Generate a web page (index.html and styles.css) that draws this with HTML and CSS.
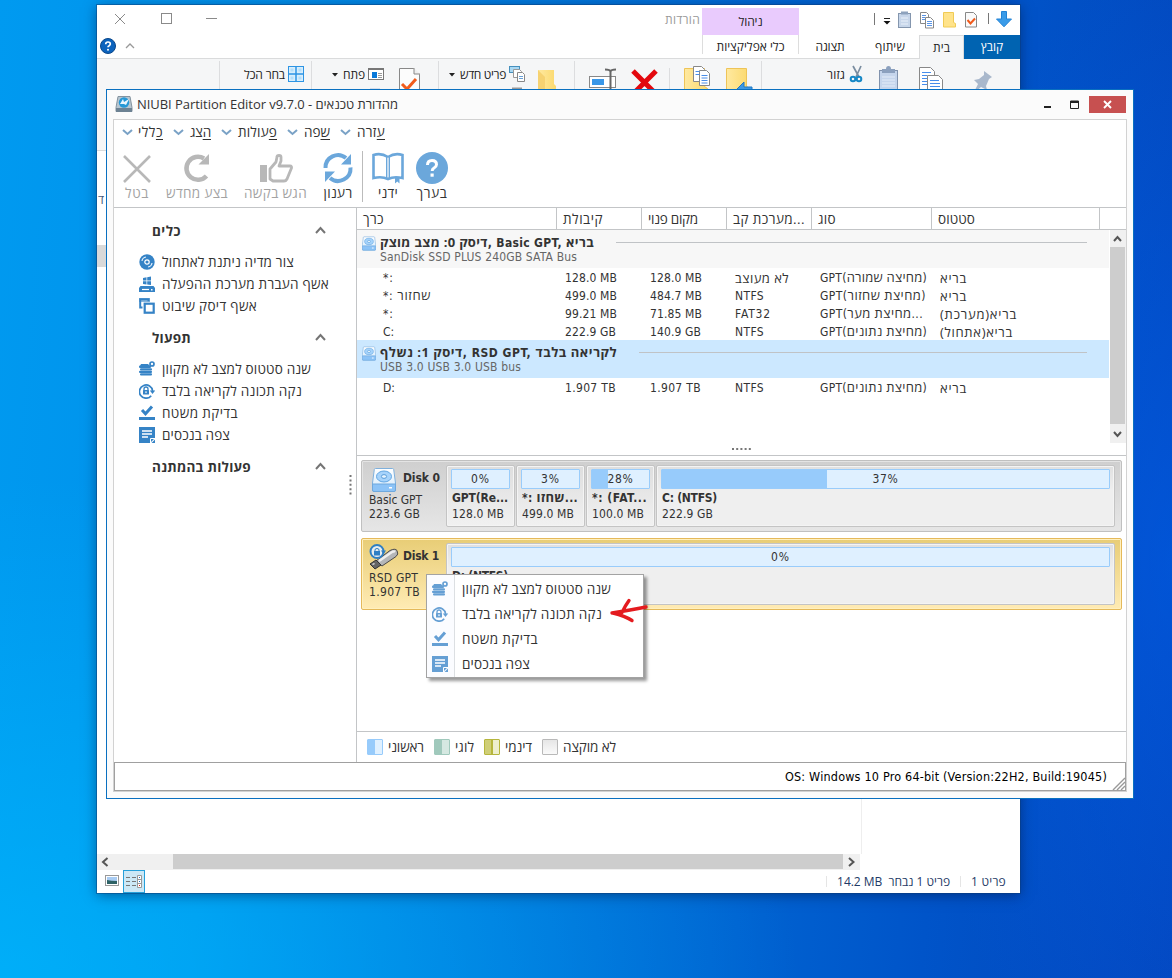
FILE: index.html
```html
<!DOCTYPE html>
<html lang="he">
<head>
<meta charset="utf-8">
<title>NIUBI Partition Editor</title>
<link rel="stylesheet" href="styles.css">
<script src="fit.js" defer></script>
</head>
<body>
<svg class="defs" width="0" height="0">
  <defs>
    <linearGradient id="gFolder" x1="0" x2="1"><stop offset="0" stop-color="#ffe9a0"/><stop offset="1" stop-color="#fbd96e"/></linearGradient>
    <linearGradient id="gDrive" x1="0" y1="0" x2="0" y2="1"><stop offset="0" stop-color="#fff"/><stop offset="1" stop-color="#d3e9fc"/></linearGradient>
  </defs>
  <symbol id="chev" viewBox="0 0 11 7"><path d="M1 1l4.500 4L10 1" fill="none" stroke="#7aa2c6" stroke-width="2"/></symbol>
  <symbol id="up" viewBox="0 0 11 9"><path d="M1 7L5.500 2L10 7" fill="none" stroke="#757575" stroke-width="2"/></symbol>
  <symbol id="drive" viewBox="0 0 24 24">
    <path d="M3.500 .5h17q1 0 1.200 1L23.500 15v7q0 1.500-1.500 1.500H2Q.5 23.500 .5 22v-7L2.300 1.500q.2-1 1.200-1z" fill="url(#gDrive)" stroke="#7fb0dc"/>
    <path d="M.5 16h23v6q0 1.500-1.500 1.500H2Q.5 23.500 .5 22z" fill="#8cc3f7" stroke="#6fa8dd"/>
    <ellipse cx="12" cy="8.500" rx="7.500" ry="5.500" fill="#a6d3fb" stroke="#62a6e2"/><ellipse cx="12" cy="8.500" rx="2.600" ry="1.900" fill="#e6f4ff" stroke="#5a9edb"/>
    <rect x="17" y="19" width="3" height="1.500" fill="#fff"/>
  </symbol>
  <symbol id="stack" viewBox="0 0 16 16"><g fill="currentColor"><path d="M2 3h7l2 2H1z"/><rect x="0" y="4.500" width="12" height="2.500" rx="1"/><rect x="1" y="7.300" width="12" height="2.200" rx="1"/><rect x="0" y="9.800" width="13" height="2.200" rx="1"/><rect x="1" y="12.300" width="12" height="2.200" rx="1"/></g><circle cx="13" cy="3" r="2" fill="#fff" stroke="currentColor" stroke-width="1.700"/></symbol>
  <symbol id="lock" viewBox="0 0 16 16"><path d="M12.200 12.700A6.600 6.600 0 1 1 13.600 8" fill="none" stroke="currentColor" stroke-width="1.700"/><path d="M10.800 7.500H16.200L13.500 11z" fill="currentColor"/><rect x="4" y="7" width="6" height="4.500" rx=".5" fill="currentColor"/><path d="M5 7.500V6a2 2 0 0 1 4 0v1.500" fill="none" stroke="currentColor" stroke-width="1.300"/><rect x="6.400" y="8.300" width="1.200" height="1.800" fill="#fff"/></symbol>
  <symbol id="check" viewBox="0 0 16 16"><path d="M3 5l3.500 3.800L13 1.500" fill="none" stroke="currentColor" stroke-width="3"/><rect x="0" y="12" width="16" height="3" fill="currentColor"/></symbol>
  <symbol id="note" viewBox="0 0 16 16"><path d="M0 0h16v11l-5 5H0z" fill="currentColor"/><path d="M3 4h10M3 7h10M3 10h6" stroke="#fff" stroke-width="1.400"/><path d="M11.500 16v-4.500H16" fill="none" stroke="#fff"/><path d="M12.500 16H16v-3.500z" fill="currentColor"/></symbol>
</svg>

<section class="explorer">
  <header class="ex-title">
    <svg class="ex-ctl" width="132" height="12"><g fill="none" stroke="#8a8a8a"><path d="M1 0l10 10M11 0L1 10"/><rect x="47.500" y="-.5" width="10" height="10"/><path d="M92 4.500h11"/></g></svg>
    <span class="ex-name"><span class="t" data-w="35">הורדות</span></span>
    <span class="ex-manage"><span class="t" data-w="24">ניהול</span></span>
    <svg class="quick" width="146" height="22">
      <path d="M5.500 4v12M119.500 4v11" stroke="#777"/>
      <path d="M15 9.500h6" stroke="#222"/><path d="M14.500 12h7l-3.500 3.500z" fill="#111"/>
      <rect x="29.500" y="4.500" width="12" height="14" fill="#c7d6ea" stroke="#8496ae"/><rect x="32" y="2.500" width="7" height="3" fill="#8da2bd"/><path d="M32 9h7M32 12h7M32 15h7" stroke="#eaf1fa"/>
      <path d="M51.500 3.500h6l2 2v9h-8z" fill="#fff" stroke="#888"/><path d="M56.500 8.500h5l3 3v7.500h-8z" fill="#fff" stroke="#888"/><path d="M53 6.500h4M53 8.500h3M53 10.500h3M58 12.500h5M58 14.500h5M58 16.500h5" stroke="#5a95e6"/>
      <path d="M74.500 3.500h10v10l2 1v3.500h-12z" fill="#ffe38a" stroke="#f0cb55"/>
      <path d="M96.500 3.500h8l3 3v11.500h-11z" fill="#fafafa" stroke="#888"/><path d="M98.500 11l3 3.500 4.500-5" fill="none" stroke="#f05a1c" stroke-width="2"/>
      <path d="M132.500 2.500h5v7.500h5L135 17.800 127.500 10h5z" fill="#3a9be8" stroke="#2283d6"/>
    </svg>
  </header>
  <nav class="ex-tabs">
    <svg width="38" height="18"><circle cx="11" cy="9" r="7.500" fill="#0c63bd" stroke="#0a478a"/><path d="M8.700 7.300q0-2.300 2.300-2.300t2.300 2q0 1-1.200 1.700-1.100.6-1.100 1.600" fill="none" stroke="#fff" stroke-width="1.700"/><circle cx="11" cy="12.800" r="1" fill="#fff"/><path d="M29 11l4-4 4 4" fill="none" stroke="#999" stroke-width="1.300"/></svg>
    <span class="tab tools"><span class="t" data-w="68">כלי אפליקציות</span></span>
    <span class="tab view"><span class="t" data-w="29">תצוגה</span></span>
    <span class="tab share"><span class="t" data-w="30">שיתוף</span></span>
    <span class="tab home"><span class="t" data-w="17">בית</span></span>
    <span class="tab file"><span class="t" data-w="22">קובץ</span></span>
  </nav>
  <div class="ribbon">
    <div class="rg"></div>
    <div class="rg g-sel"><span class="t" data-w="41">בחר הכל</span><svg width="16" height="16"><rect x=".5" y=".5" width="15" height="15" fill="#d8eefc" stroke="#2d94e4"/><path d="M8 0v16M0 8h16" stroke="#2d94e4" stroke-width="1.500"/><path d="M2.500 2.500h3v3h-3zM10.500 2.500h3v3h-3zM2.500 10.500h3v3h-3zM10.500 10.500h3v3h-3z" fill="#b4defa"/></svg></div>
    <div class="rg g-open"><svg class="dd" width="6" height="16"><path d="M0 4h6l-3 3.500z" fill="#222"/></svg><span class="t" data-w="22">פתח</span><svg width="52" height="30"><rect x=".5" y="2.500" width="15" height="11" fill="#fff" stroke="#777"/><path d="M0 3h16" stroke="#777" stroke-width="2"/><rect x="4" y="6" width="5" height="6" fill="#0878d8"/><path d="M10 7.500h4M10 9.500h4M10 11.500h4" stroke="#999"/><path d="M2 23h10" stroke="#b5c6e0"/><path d="M31.500 2.500h14l6 6V30h-20z" fill="#fcfcfc" stroke="#888"/><path d="M46 2v6h6" fill="#eee" stroke="#888"/><path d="M34 18l5 5 9-10" fill="none" stroke="#f25c1c" stroke-width="3"/></svg></div>
    <div class="rg g-new"><svg class="dd" width="6" height="16"><path d="M0 4h6l-3 3.500z" fill="#222"/></svg><span class="t" data-w="46">פריט חדש</span><svg width="50" height="30"><rect x=".5" y=".5" width="10" height="6" fill="#a9d8f3" stroke="#4690bd"/><path d="M4.500 3.500h6l2 2v6h-8z" fill="#fff" stroke="#999"/><path d="M8.500 6.500h5l2 2v7h-7z" fill="#fff" stroke="#888"/><path d="M10 10.500h4M10 12.500h4" stroke="#69a1d8"/><path d="M3 22.500h10" stroke="#999" stroke-width="2"/><path d="M29 4h16v14l2 2v9H29z" fill="url(#gFolder)"/><path d="M29 4l7 7v12l-5 6h-2z" fill="#f6d271"/></svg></div>
    <div class="rg g-org"><svg width="178" height="30"><rect x="14.500" y="10.500" width="26" height="11" fill="#fff" stroke="#888"/><rect x="17" y="13" width="12" height="6" fill="#3997e8"/><path d="M30 3.500q5 0 5.500 2 .5-2 5.500-2M35.500 5v24" fill="none" stroke="#666" stroke-width="2"/><path d="M58 5l23 23M81 5L58 28" stroke="#e3080e" stroke-width="5"/><path d="M94.500 2v27" stroke="#dcdddf"/><path d="M109.500 2.500h20v18l3 2v8h-23z" fill="url(#gFolder)" stroke="#eec458"/><path d="M118.500 .5h8l3 3v12h-11z" fill="#fff" stroke="#888"/><path d="M124.500 4.500h7l3 3v12h-10z" fill="#fff" stroke="#888"/><path d="M120.500 5.500h4M120.500 8.500h4M126.500 9.500h6M126.500 12h6M126.500 14.500h6M126.500 17h6" stroke="#4b8ee8"/><path d="M151.500 2.500h20v18l2 1v9h-22z" fill="url(#gFolder)" stroke="#eec458"/><path d="M161 24l8-8v5h8v9h-14z" fill="#3c98e4" stroke="#1e78c4"/></svg></div>
    <div class="rg g-clip"><span class="t" data-w="18">גזור</span><svg width="150" height="30"><path d="M3 0l6 11M11 0L6 11" stroke="#7a8da0" stroke-width="1.700"/><circle cx="3" cy="13" r="2.300" fill="none" stroke="#1687c6" stroke-width="2"/><circle cx="9" cy="13" r="2.300" fill="none" stroke="#1687c6" stroke-width="2"/><rect x="29.500" y="4.500" width="18" height="26" fill="#c5d5ec" stroke="#8092ad"/><path d="M32 7V3h4q0-3 2.500-3T41 3h4v4z" fill="#8ba0be"/><path d="M32 11h13M32 14h13M32 17h13M32 20h13" stroke="#e3ecf8"/><path d="M69.500 1.500h11l4 4v18h-15z" fill="#fff" stroke="#888"/><path d="M77.500 9.500h11l4 4v17h-15z" fill="#fff" stroke="#888"/><path d="M72 6.500h9M72 9.500h5M72 12.500h5M72 15.500h5M72 18.500h5M80 14.500h9M80 17.500h10M80 20.500h10" stroke="#478deb"/><path d="M134 5l8 6-3 2-3 7 1 4-6-3-8 7 5-10-4-4 5-1 5-4z" fill="#a9b8cc"/></svg></div>
  </div>
  <div class="ex-body"><span class="ex-cut">ד</span><div class="ex-mark"></div></div>
  <div class="ex-scroll"><svg width="76" height="16"><path d="M10.500 4L6 8l4.500 4" fill="none" stroke="#555" stroke-width="2"/></svg><i></i><svg width="17" height="16"><path d="M6 4l4.500 4L6 12" fill="none" stroke="#555" stroke-width="2"/></svg></div>
  <footer class="ex-status" dir="rtl">
    <span class="t" data-w="35">פריט 1</span><b></b><span class="t" data-w="113">פריט 1 נבחר&nbsp; <bdi dir="ltr">14.2 MB</bdi></span><b class="b2"></b>
    <svg class="views" width="48" height="23"><rect x="26.500" y=".5" width="21" height="22" fill="#cce8f6" stroke="#26a0da"/><path d="M29 7.500h4M35 7.500h4M29 11.500h4M35 11.500h4M29 15.500h4M35 15.500h4" stroke="#777"/><path d="M40.500 5.500h4v12h-4zM40.500 9.500h4M40.500 13.500h4" fill="#fff" stroke="#999"/><path d="M42 7h1v1h-1zM42 11h1v1h-1z" fill="#2a70c0"/><path d="M42 15h1v1h-1z" fill="#d22"/><rect x="8.500" y="5.500" width="13" height="10" fill="#fff" stroke="#999"/><path d="M10 7h10v7H10z" fill="#a9ccf3"/><path d="M10 10q4 1 10 1v3H10z" fill="#2e6265"/></svg>
  </footer>
</section>

<main class="app">
  <header class="titlebar">
    <svg width="16" height="16"><path d="M2 .5h12l2 11v4H0v-4z" fill="#b8c6d0" stroke="#84939f"/><path d="M0 12h16v4H0z" fill="#6d8293"/><circle cx="8" cy="6.500" r="5.200" fill="#2698d6"/><path d="M4 8l3-5 1 3 5-3-3 6-2-1z" fill="#e9f6ff"/></svg>
    <span class="t" data-w="261">NIUBI Partition Editor v9.7.0 - מהדורת טכנאים</span>
    <svg class="wctl" width="46" height="17"><path d="M0 11h7" stroke="#222" stroke-width="2"/><path d="M26.500 5h8v7.500h-8z" fill="none" stroke="#222"/><path d="M26 6h9" stroke="#222" stroke-width="2"/></svg>
    <span class="close"><svg width="9" height="9"><path d="M1 1l7 7M8 1L1 8" stroke="#fff" stroke-width="1.900"/></svg></span>
  </header>
  <div class="panel">
    <nav class="menu">
      <span><svg width="11" height="7"><use href="#chev"/></svg><span class="t" data-w="25"><u>כ</u>ללי</span></span>
      <span><svg width="11" height="7"><use href="#chev"/></svg><span class="t" data-w="21"><u>ה</u>צג</span></span>
      <span><svg width="11" height="7"><use href="#chev"/></svg><span class="t" data-w="39"><u>פ</u>עולות</span></span>
      <span><svg width="11" height="7"><use href="#chev"/></svg><span class="t" data-w="26"><u>ש</u>פה</span></span>
      <span><svg width="11" height="7"><use href="#chev"/></svg><span class="t" data-w="28"><u>ע</u>זרה</span></span>
    </nav>
    <div class="toolbar">
      <span class="tb off"><svg width="28" height="32"><path d="M1 4l26 26M27 4L1 30" stroke="#b8b8b8" stroke-width="2.600"/></svg><span class="t" data-w="24">בטל</span></span>
      <span class="tb off"><svg width="28" height="32"><path d="M21 6.500A11.500 11.500 0 1 0 23.500 24" fill="none" stroke="#b8b8b8" stroke-width="4.500"/><path d="M26 2v10.500H15.500z" fill="#b8b8b8"/></svg><span class="t" data-w="62">בצע מחדש</span></span>
      <span class="tb off"><svg width="34" height="32"><rect x="1" y="13" width="7" height="17" fill="#b8b8b8"/><path d="M11 27V17l6-7 1-5q0-1.500 2-1.500t2 1.500v4l-2 5h11q2 0 1.500 2L28 27q-1 2-3 2H14z" fill="none" stroke="#b8b8b8" stroke-width="2.800" stroke-linejoin="round"/></svg><span class="t" data-w="63">הגש בקשה</span></span>
      <span class="tb"><svg width="30" height="32"><path d="M2.500 16A12.500 12.500 0 0 1 23 6M27.500 15.500A12.500 12.500 0 0 1 7 26" fill="none" stroke="#6ba7db" stroke-width="4"/><path d="M28 2v10.500H18zM2 30V19.500H12z" fill="#6ba7db"/></svg><span class="t" data-w="29">רענון</span></span>
      <i class="tsep"></i>
      <span class="tb"><svg width="34" height="32"><path d="M17 5Q10 .5 2.500 3v23Q11 24 17 27 23 24 31.500 26V3Q24 .5 17 5" fill="none" stroke="#6ba7db" stroke-width="2.600"/><path d="M15.700 5v21M18.300 5v21" stroke="#6ba7db" stroke-width="1.400"/><path d="M24 25h4.500v6.500l-2.200-2L24 31.500z" fill="#6ba7db"/></svg><span class="t" data-w="20">ידני</span></span>
      <span class="tb"><svg width="32" height="32"><circle cx="16" cy="16" r="16" fill="#6ba7db"/><path d="M11.500 13q0-4.500 4.500-4.500t4.500 4q0 2-2.500 3.500-1.800 1-1.800 3" fill="none" stroke="#fff" stroke-width="3"/><rect x="14.500" y="21.500" width="3.200" height="3.200" fill="#fff"/></svg><span class="t" data-w="31">בערך</span></span>
    </div>
    <div class="work">
      <aside class="side">
        <h3><span class="t" data-w="29">כלים</span><svg width="11" height="9"><use href="#up"/></svg></h3>
        <p><svg width="16" height="16"><circle cx="8" cy="8" r="7.700" fill="#3583c6"/><circle cx="8" cy="8" r="2.200" fill="#3583c6" stroke="#fff" stroke-width="1.200"/><path d="M3 7Q3.500 3.500 7 3M13 9Q12.500 12.500 9 13" fill="none" stroke="#e4f0fb" stroke-width="1.200"/></svg><span class="t" data-w="132">צור מדיה ניתנת לאתחול</span></p>
        <p><svg width="16" height="16"><path d="M4 2l3.500-.7v3.200H4zM8.200 1.200L12 .5v4H8.200zM4 5.200h3.500v3.200L4 8zM8.200 5.200H12V9l-3.800-.5z" fill="#3583c6"/><path d="M1.500 10h13l1.500 2v4H0v-4z" fill="#3583c6"/><path d="M3 13.500h7" stroke="#fff" stroke-width="1.200"/><rect x="12" y="13" width="1.500" height="1.500" fill="#fff"/></svg><span class="t" data-w="167">אשף העברת מערכת ההפעלה</span></p>
        <p><svg width="16" height="16"><path d="M3.500 9.500H1.200V1.200h8.300v2" fill="none" stroke="#3583c6" stroke-width="2"/><path d="M0 0h11v4H0z" fill="#3583c6" opacity=".6"/><rect x="5.700" y="5.700" width="9" height="9" fill="#fff" stroke="#3583c6" stroke-width="2.200"/></svg><span class="t" data-w="95">אשף דיסק שיבוט</span></p>
        <h3><span class="t" data-w="39">תפעול</span><svg width="11" height="9"><use href="#up"/></svg></h3>
        <p><svg width="16" height="16"><use href="#stack"/></svg><span class="t" data-w="149">שנה סטטוס למצב לא מקוון</span></p>
        <p><svg width="16" height="16"><use href="#lock"/></svg><span class="t" data-w="140">נקה תכונה לקריאה בלבד</span></p>
        <p><svg width="16" height="16"><use href="#check"/></svg><span class="t" data-w="76">בדיקת משטח</span></p>
        <p><svg width="16" height="16"><use href="#note"/></svg><span class="t" data-w="68">צפה בנכסים</span></p>
        <h3><span class="t" data-w="99">פעולות בהמתנה</span><svg width="11" height="9"><use href="#up"/></svg></h3>
        <svg class="grip-v" width="3" height="20"><path d="M1.500 0v20" stroke="#777" stroke-width="2" stroke-dasharray="2 2.400"/></svg>
      </aside>
      <section class="content">
        <div class="cols head">
          <span><span class="t" data-w="21">כרך</span></span><span><span class="t" data-w="40">קיבולת</span></span><span><span class="t" data-w="50">מקום פנוי</span></span><span><span class="t" data-w="72">מערכת קב...</span></span><span><span class="t" data-w="18">סוג</span></span><span><span class="t" data-w="37">סטטוס</span></span><span></span>
        </div>
        <div class="tablewrap">
          <div class="table">
            <div class="group"><svg width="14" height="15"><use href="#drive"/></svg><div class="gt"><strong class="t" data-w="214"><span class="he">דיסק 0: מצב מוצק</span>, Basic GPT, <span class="he">בריא</span></strong><span class="t" data-w="197">SanDisk SSD PLUS 240GB SATA Bus</span></div><hr></div>
            <div class="cols row"><span><span class="t" data-w="11">*:</span></span><span><span class="t" data-w="52">128.0 MB</span></span><span><span class="t" data-w="52">128.0 MB</span></span><span><span class="t he" data-w="54">לא מעוצב</span></span><span><span class="t" data-w="107">GPT(<span class="he">מחיצה שמורה</span>)</span></span><span><span class="t he" data-w="27">בריא</span></span></div>
            <div class="cols row"><span><span class="t" data-w="48">*: <span class="he">שחזור</span></span></span><span><span class="t" data-w="52">499.0 MB</span></span><span><span class="t" data-w="52">484.7 MB</span></span><span><span class="t" data-w="29">NTFS</span></span><span><span class="t" data-w="106">GPT(<span class="he">מחיצת שחזור</span>)</span></span><span><span class="t he" data-w="27">בריא</span></span></div>
            <div class="cols row"><span><span class="t" data-w="11">*:</span></span><span><span class="t" data-w="52">99.21 MB</span></span><span><span class="t" data-w="52">71.85 MB</span></span><span><span class="t" data-w="36">FAT32</span></span><span><span class="t" data-w="103">GPT(<span class="he">מחיצת מער</span>...</span></span><span><span class="t he" data-w="77">בריא(מערכת)</span></span></div>
            <div class="cols row"><span><span class="t" data-w="11">C:</span></span><span><span class="t" data-w="51">222.9 GB</span></span><span><span class="t" data-w="51">140.9 GB</span></span><span><span class="t" data-w="29">NTFS</span></span><span><span class="t" data-w="107">GPT(<span class="he">מחיצת נתונים</span>)</span></span><span><span class="t he" data-w="73">בריא(אתחול)</span></span></div>
            <div class="group sel"><svg width="14" height="15"><use href="#drive"/></svg><div class="gt"><strong class="t" data-w="237"><span class="he">דיסק 1: נשלף</span>, RSD GPT, <span class="he">לקריאה בלבד</span></strong><span class="t" data-w="141">USB 3.0 USB 3.0 USB bus</span></div><hr></div>
            <div class="cols row"><span><span class="t" data-w="12">D:</span></span><span><span class="t" data-w="51">1.907 TB</span></span><span><span class="t" data-w="51">1.907 TB</span></span><span><span class="t" data-w="29">NTFS</span></span><span><span class="t" data-w="107">GPT(<span class="he">מחיצת נתונים</span>)</span></span><span><span class="t he" data-w="27">בריא</span></span></div>
          </div>
          <div class="vscroll"><svg width="15" height="17"><path d="M4 11l3.500-4L11 11" fill="none" stroke="#555" stroke-width="2"/></svg><i></i><svg width="15" height="19"><path d="M4 8l3.500 4L11 8" fill="none" stroke="#555" stroke-width="2"/></svg></div>
        </div>
        <div class="split"><svg width="19" height="2"><path d="M0 1h19" stroke="#777" stroke-width="2" stroke-dasharray="2 2.200"/></svg></div>
        <div class="disks">
          <div class="disk">
            <div class="dinfo"><div class="dname"><svg width="24" height="24"><use href="#drive"/></svg><strong class="t" data-w="37">Disk 0</strong></div><span class="t" data-w="53">Basic GPT</span><span class="t" data-w="51">223.6 GB</span></div>
            <div class="part"><div class="bar"><span class="t" data-w="19">0%</span></div><strong class="t" data-w="56">GPT(Re...</strong><span class="t" data-w="52">128.0 MB</span></div>
            <div class="part"><div class="bar"><span class="t" data-w="19">3%</span></div><strong class="t" data-w="56">*: <span class="he">שחזו</span>...</strong><span class="t" data-w="52">499.0 MB</span></div>
            <div class="part"><div class="bar"><i style="width:16px"></i><span class="t" data-w="26">28%</span></div><strong class="t" data-w="55">*: (FAT...</strong><span class="t" data-w="52">100.0 MB</span></div>
            <div class="part wide"><div class="bar"><i style="width:165px"></i><span class="t" data-w="26">37%</span></div><strong class="t" data-w="55">C: (NTFS)</strong><span class="t" data-w="51">222.9 GB</span></div>
          </div>
          <div class="disk gold">
            <div class="dinfo"><div class="dname"><svg class="usb" width="30" height="25"><path d="M7 17l14-10.500q5-2.500 7 0 2 4-1 6L13 22z" fill="#b4b6b8" stroke="#4a4a4a"/><path d="M10 17l13-9q2-1 3 0" fill="none" stroke="#eee" stroke-width="2.500"/><path d="M1 20l6-4 5 5-6 4z" fill="#666" stroke="#333"/><path d="M3 20l2-1 1 1-2 1z" fill="#ddd"/><circle cx="8" cy="7.500" r="6.500" fill="#e7edf0" stroke="#2e7fc4" stroke-width="2"/><rect x="5" y="7" width="6" height="4.500" fill="#2e7fc4"/><path d="M6 8V6q0-1.500 2-1.500T10 6v2" fill="none" stroke="#2e7fc4"/><path d="M12 6.500h5l-2.500 4z" fill="#2e7fc4"/></svg><strong class="t" data-w="36">Disk 1</strong></div><span class="t" data-w="49">RSD GPT</span><span class="t" data-w="51">1.907 TB</span></div>
            <div class="part wide"><div class="bar"><span class="t" data-w="19">0%</span></div><strong class="t" data-w="56">D: (NTFS)</strong></div>
          </div>
        </div>
        <div class="legend">
          <span><i class="l1"></i><span class="t" data-w="36">ראשוני</span></span><span><i class="l2"></i><span class="t" data-w="19">לוגי</span></span><span><i class="l3"></i><span class="t" data-w="27">דינמי</span></span><span><i class="l4"></i><span class="t" data-w="53">לא מוקצה</span></span>
        </div>
      </section>
    </div>
    <footer class="status"><span class="t" data-w="322">OS: Windows 10 Pro 64-bit (Version:22H2, Build:19045)</span><svg width="13" height="13"><path d="M1 13L13 1M5 13l8-8M9 13l4-4" stroke="#999" stroke-width="1.400"/></svg></footer>
  </div>
</main>

<div class="ctx">
  <p><svg width="16" height="16"><use href="#stack"/></svg><span class="t" data-w="149">שנה סטטוס למצב לא מקוון</span></p>
  <p><svg width="16" height="16"><use href="#lock"/></svg><span class="t" data-w="140">נקה תכונה לקריאה בלבד</span></p>
  <p><svg width="16" height="16"><use href="#check"/></svg><span class="t" data-w="76">בדיקת משטח</span></p>
  <p><svg width="16" height="16"><use href="#note"/></svg><span class="t" data-w="68">צפה בנכסים</span></p>
</div>
<svg class="redarrow" width="40" height="28"><path d="M37 9Q22 12 3 15M20 2.500Q16 8 13 14.500M4 15Q16 18 23 22.500" fill="none" stroke="#e41b1f" stroke-width="3.400" stroke-linecap="round"/></svg>
</body>
</html>
```
FILE: styles.css
```css
* { box-sizing: border-box; }
body {
  margin: 0; width: 1172px; height: 978px; overflow: hidden; position: relative;
  font: 12px/14px "DejaVu Sans Condensed", "DejaVu Sans", sans-serif; color: #333;
  background:
    radial-gradient(ellipse 260px 600px at 1172px 560px, rgba(0,95,235,.55), rgba(0,95,235,0)),
    radial-gradient(ellipse 800px 500px at 0 978px, rgba(0,190,255,.6), rgba(0,190,255,0)),
    linear-gradient(95deg, #009af0 0%, #0090ea 22%, #0070d8 52%, #0054c9 80%, #0445bb 100%);
}
svg { display: block; flex: none; overflow: visible; }
.defs { position: absolute; }
p, h3, hr { margin: 0; }
.t { display: block; white-space: nowrap; flex: none; width: max-content; }
strong, h3 { font-weight: bold; }
.he, .menu, .toolbar, .side, .head, .legend, .ctx { font-family: "Open Sans", "DejaVu Sans Condensed", sans-serif; }
.he { font-size: 13px; line-height: 12px; }

/* file explorer behind the application */
.explorer {
  position: absolute; left: 97px; top: 5px; width: 923px; height: 888px; background: #fff;
  box-shadow: 0 0 0 1px rgba(10,60,120,.45), 0 2px 12px rgba(0,20,60,.5);
  display: flex; flex-direction: column; font-family: "Open Sans", "DejaVu Sans Condensed", sans-serif; font-size: 12px; color: #222;
}
.ex-title { height: 30px; display: flex; }
.ex-ctl { margin: 9px 0 0 17px; }
.ex-name { margin: 8px 0 0 418px; width: 38px; color: #999; padding-left: 1px; }
.ex-manage { width: 97px; height: 27px; margin-top: 3px; background: #e9cbfd; display: flex; justify-content: center; padding-top: 7px; }
.quick { margin: 4px 0 0 70px; }
.ex-tabs { height: 24px; display: flex; align-items: stretch; border-bottom: 1px solid #dadbdc; }
.ex-tabs > svg { margin-top: 2px; }
.tab { display: flex; align-items: center; justify-content: center; }
.tools { margin-left: 567px; width: 97px; border-left: 1px solid #ddd; border-right: 1px solid #ddd; margin-bottom: 4px; padding-top: 4px; }
.view { width: 62px; }
.share { width: 58px; }
.home { width: 45px; background: #f5f6f7; border: 1px solid #dadbdc; border-bottom: 0; margin-bottom: -1px; }
.file { width: 56px; background: #0063b1; color: #fff; margin-bottom: -1px; }
.ribbon { height: 92px; background: #f5f6f7; border-bottom: 1px solid #dadbdc; display: grid; grid-template-columns: 123px 92px 127px 136px 187px 1fr; }
.rg { border-right: 1px solid #dcdddf; display: flex; align-items: flex-start; padding-top: 5px; margin-top: 2px; }
.rg:last-child { border: 0; }
.rg > .t { margin-top: 2px; }
.rg > svg { margin-left: 3px; }
.rg > svg.dd { margin: 3px 5px 0 0; }
.rg.g-sel { padding-left: 24px; }
.g-open { padding-left: 20px; }
.g-new { padding-left: 10px; }
.rg.g-org > svg { margin-left: 0; }
.g-clip { padding-left: 65px; }
.rg.g-clip > svg { margin-left: 5px; }
.ex-body { flex: 1; width: 765px; border-right: 1px solid #eee; padding-top: 42px; overflow: hidden; }
.ex-cut { color: #44587a; display: block; width: 9px; white-space: nowrap; margin-left: 1px; }
.ex-mark { margin-top: 38px; height: 22px; width: 14px; background: #d9d9d9; }
.ex-scroll { width: 763px; height: 16px; background: #f0f0f0; display: flex; }
.ex-scroll i { flex: 1; height: 15px; background: #cdcdcd; }
.ex-status { height: 23px; padding-right: 14px; display: flex; align-items: center; color: #1e3a66; }
.ex-status b { width: 1px; height: 11px; background: #e5e5e5; margin: 0 10px; }
.views { margin-right: auto; }

/* application window */
.app {
  position: absolute; left: 106px; top: 89px; width: 1028px; height: 710px; background: #fbfbfb;
  border: 1px solid #0a70c0; padding: 0 6px 6px 6px; display: flex; flex-direction: column;
}
.titlebar { height: 29px; flex: none; display: flex; align-items: center; padding-left: 3px; font-family: "Open Sans", "DejaVu Sans Condensed", sans-serif; font-size: 13px; }
.titlebar > .t { margin: -1px 0 0 5px; }
.titlebar > svg:first-child { margin-top: -1px; }
.wctl { margin-left: auto; margin-right: -1px; }
.close { width: 37px; height: 17px; background: #c75050; display: flex; align-items: center; justify-content: center; margin-right: 1px; }
.panel { flex: 1; border: 1px solid #d2d2d2; background: #fff; display: flex; flex-direction: column; }
.menu { height: 24px; display: flex; align-items: center; padding-left: 8px; gap: 10px; font-size: 13.500px; }
.menu > span { display: flex; align-items: center; gap: 6px; }
.menu > span:first-child { gap: 5px; }
.menu u { text-underline-offset: 2px; }
.toolbar { height: 64px; padding-top: 8px; display: flex; font-size: 13.500px; border-bottom: 1px solid #c3c5c7; padding-left: 9px; }
.tb { display: flex; flex-direction: column; align-items: center; gap: 2px; margin-right: 16px; }
.tb:nth-child(4) { margin-right: 0; width: 30px; }
.tb:nth-child(6) { margin-right: 11px; }
.off { color: #a3a3a3; }
.tb:first-child { margin-right: 15px; }
.tsep { width: 1px; height: 51px; background: #bbb; margin: -1px 8px 0 9px; }
.work { height: 554px; display: flex; }
.side { width: 243px; position: relative; border-right: 1px solid #c3c5c7; padding-top: 12px; font-size: 13.500px; }
.side h3 { height: 22px; display: flex; align-items: center; justify-content: space-between; padding: 0 30px 0 38px; font-size: 13.500px; }
.side h3 svg { margin-top: -1px; }
.side p { height: 22px; display: flex; align-items: center; gap: 7px; padding-left: 25px; }
.side svg { color: #3583c6; }
.side h3 + p { margin-top: 9px; }
.side p + h3 { margin-top: 10px; }
.grip-v { position: absolute; right: 4px; top: 267px; }
.content { flex: 1; display: flex; flex-direction: column; }
.cols { display: grid; grid-template-columns: 200px 85px 85px 85px 120px 168px 1fr; }
.head { height: 22px; border-bottom: 1px solid #c3c5c7; }
.head > span { border-right: 1px solid #c3c5c7; padding: 4px 0 0 6px; font-size: 13.500px; }
.head > span:last-child { border: 0; }
.tablewrap { height: 213px; display: flex; justify-content: space-between; }
.table { width: 752px; }
.group { height: 38px; background: #f7f7f7; display: flex; padding: 6px 22px 0 5px; }
.gt { margin-left: 4px; line-height: 14px; }
.gt > span { color: #666; }
.gt > strong { height: 14px; }
.group hr { flex: 1; border: 0; height: 1px; background: #c0c3c6; margin: 6px 0 0 22px; }
.sel { background: #cce8ff; }
.row { height: 18px; }
.row > span { padding: 3px 0 0 8px; height: 18px; }
.row > span:first-child { padding-left: 26px; }
.row .t.he { line-height: 14px; }
.vscroll { width: 16px; background: #f0f0f0; display: flex; flex-direction: column; }
.vscroll i { flex: 1; background: #cdcdcd; width: 15px; }
.split { height: 13px; border-bottom: 1px solid #c3c5c7; display: flex; justify-content: center; padding: 5px 0 0 0; }
.disks { flex: 1; padding: 4px 4px 0; }
.disk { height: 72px; border: 1px solid #c0c0c0; border-radius: 2px; box-shadow: inset 0 0 0 1px #e4e4e4; background: linear-gradient(#cfcfcf, #e6e6e6); display: flex; gap: 1px; padding: 4px 6px 4px 0; margin-bottom: 6px; }
.gold { border-color: #e5b95a; box-shadow: inset 0 0 0 1px #fff0be; background: linear-gradient(#e8cd76, #ffebb4); }
.dinfo { width: 83px; padding: 1px 0 0 7px; flex: none; }
.dname { height: 27px; display: flex; gap: 7px; padding-left: 3px; align-items: center; }
.dname .t { margin-top: -4px; }
.usb { margin-left: -3px; margin-right: -3px; margin-top: -3px; }
.part { width: 69px; height: 62px; flex: none; border: 1px solid #c4c4c4; border-radius: 2px; background: linear-gradient(#dedede, #f1f1f1); box-shadow: inset 0 0 0 1px #f4f4f4; padding: 3px 4px; }
.part.wide { flex: 1; background: linear-gradient(#e0e0e0, #efefef 40%); }
.bar { height: 20px; border: 1px solid #99ccfb; border-radius: 1px; background: #dff0ff; display: grid; place-items: center; margin-bottom: 1px; }
.bar > * { grid-area: 1 / 1; }
.bar i { justify-self: start; height: 18px; background: #97cbfb; }
.part > .t { margin-left: 1px; line-height: 16px; height: 16px; }
.legend { height: 31px; border-top: 1px solid #c3c5c7; padding-left: 10px; display: flex; align-items: center; gap: 10px; font-size: 13.500px; }
.legend > span { display: flex; align-items: center; gap: 5px; }
.legend i { width: 16px; height: 16px; border: 1px solid #97cbfb; border-radius: 1px; background: linear-gradient(90deg, #97cbfb 50%, #dff0ff 50%); }
.legend .l2 { border-color: #a0c9bc; background: linear-gradient(90deg, #a0c9bc 50%, #d5e8e1 50%); }
.legend .l3 { border-color: #b6b63d; background: linear-gradient(90deg, #cfce77 43%, #b6b63d 43% 56%, #eeefce 56%); }
.legend .l4 { border-color: #b9b9b9; background: linear-gradient(#e6e6e6, #fafafa); }
.status { height: 29px; margin-top: auto; border: 1px solid #a0a0a0; display: flex; align-items: center; justify-content: flex-end; color: #000; font-size: 12.500px; }
.status svg { align-self: flex-end; margin-left: 5px; }

/* context menu */
.ctx { position: absolute; left: 426px; top: 574px; width: 218px; height: 104px; border: 1px solid #a3a3a3; background: linear-gradient(90deg, #fbfcff 27px, #dcdfe2 27px 28px, #fff 28px); padding: 1px 0 0 5px; box-shadow: 3px 3px 3px rgba(0,0,0,.4); font-size: 13.500px; }
.ctx p { height: 25px; display: flex; align-items: center; gap: 14px; }
.ctx svg { color: #659fd4; }
.redarrow { position: absolute; left: 609px; top: 598px; }
```
FILE: fit.js
```js
// Spread each label's letters so it fills the width given in data-w.
document.querySelectorAll('[data-w]').forEach(function (el) {
  var target = Number(el.dataset.w);
  var width = el.getBoundingClientRect().width;
  var count = el.textContent.length;
  el.style.letterSpacing = ((target - width) / count).toFixed(3) + 'px';
});
```
